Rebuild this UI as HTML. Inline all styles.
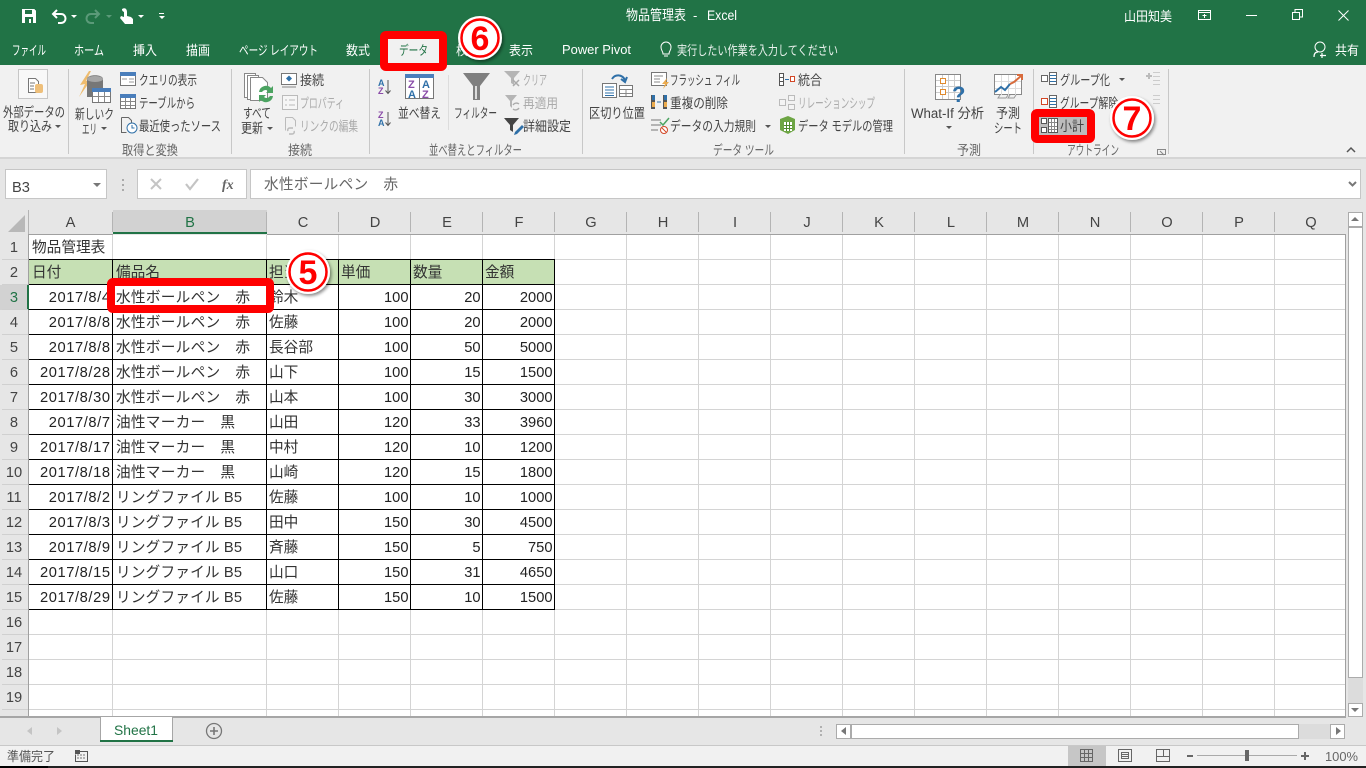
<!DOCTYPE html>
<html lang="ja"><head><meta charset="utf-8"><title>物品管理表 - Excel</title>
<style>
html,body{margin:0;padding:0;background:#e6e6e6;width:1366px;height:768px;overflow:hidden}
svg{display:block}
text{font-family:"Liberation Sans","Noto Sans CJK JP",sans-serif;white-space:pre}
.t{font-size:13px;fill:#fff}
.r{font-size:13.5px;fill:#444}
.g{font-size:13.5px;fill:#ababab}
.l{font-size:13.5px;fill:#666}
.c{font-size:14.67px;fill:#333}
.h{font-size:14.67px;fill:#444;text-anchor:middle}
.n{font-size:14.67px;fill:#222;text-anchor:end}
.d{font-size:14.67px;fill:#222;text-anchor:end;letter-spacing:.6px}
.cir{font-size:34px;font-weight:bold;fill:#f00;text-anchor:middle}
</style></head><body>
<svg width="1366" height="768" viewBox="0 0 1366 768" xmlns="http://www.w3.org/2000/svg">
<defs><filter id="s" x="-30%" y="-30%" width="160%" height="160%"><feDropShadow dx="1.5" dy="2" stdDeviation="1.5" flood-color="#000" flood-opacity=".45"/></filter></defs>
<rect width="1366" height="768" fill="#e6e6e6"/>
<!-- title bar -->
<rect width="1366" height="65" fill="#217346"/>
<g shape-rendering="crispEdges">
<path d="M22 9h12l2 2v12H22z" fill="#fff"/><rect x="25" y="10" width="7" height="4" fill="#217346"/><rect x="25" y="17" width="8" height="6" fill="#217346"/><rect x="29" y="19" width="2" height="4" fill="#fff"/>
</g>
<path d="M57 10l-4 4 4 4M53 14h8c6 0 6 9 0 9h-3" fill="none" stroke="#fff" stroke-width="2"/>
<path d="M71 15h6l-3 3z" fill="#fff"/>
<path d="M95 10l4 4-4 4M99 14h-8c-6 0-6 9 0 9h3" fill="none" stroke="#5b9a79" stroke-width="2"/>
<path d="M106 15h6l-3 3z" fill="#5b9a79"/>
<path d="M122 9c3-2 5 0 5 3v4l4 1 2 2v5h-8l-5-6 1-2 3 1v-5c-2-1-2-2-2-3z" fill="#fff"/>
<path d="M138 15h6l-3 3z" fill="#fff"/>
<path d="M159 13h5v1h-5zM159 16h6l-3 3z" fill="#fff"/>
<text x="626" y="20" class="t" style="font-size:14px" textLength="60" lengthAdjust="spacingAndGlyphs">物品管理表</text>
<text x="693" y="20" class="t">-</text>
<text x="707" y="20" class="t" style="font-size:14px" textLength="30" lengthAdjust="spacingAndGlyphs">Excel</text>
<text x="1124" y="21" class="t" textLength="48" lengthAdjust="spacingAndGlyphs">山田知美</text>
<g fill="none" stroke="#fff" shape-rendering="crispEdges">
<rect x="1198.500" y="10.500" width="12" height="9"/><path d="M1198 12.500h13M1204.500 18v-4M1202.500 15.500h4"/>
<path d="M1246 15.500h11"/><rect x="1292.500" y="12.500" width="7" height="7"/><path d="M1295 12v-2.500h7.500v7.500h-3"/>
</g>
<path d="M1338.500 10.500l10 10M1348.500 10.500l-10 10" stroke="#fff" fill="none"/>
<!-- tabs -->
<text x="12" y="55" class="t" textLength="34" lengthAdjust="spacingAndGlyphs">ファイル</text>
<text x="74" y="55" class="t" textLength="30" lengthAdjust="spacingAndGlyphs">ホーム</text>
<text x="133" y="55" class="t" textLength="24" lengthAdjust="spacingAndGlyphs">挿入</text>
<text x="186" y="55" class="t" textLength="24" lengthAdjust="spacingAndGlyphs">描画</text>
<text x="239" y="55" class="t" textLength="79" lengthAdjust="spacingAndGlyphs">ページ レイアウト</text>
<text x="346" y="55" class="t" textLength="24" lengthAdjust="spacingAndGlyphs">数式</text>
<text x="456" y="55" class="t" textLength="24" lengthAdjust="spacingAndGlyphs">校閲</text>
<text x="509" y="55" class="t" textLength="24" lengthAdjust="spacingAndGlyphs">表示</text>
<text x="562" y="54" class="t" textLength="69" lengthAdjust="spacingAndGlyphs">Power Pivot</text>
<path d="M663 54c0-3-2-3-2-7a5 5 0 0 1 10 0c0 4-2 4-2 7zM664 56h4" fill="none" stroke="#fff"/>
<text x="677" y="55" class="t" textLength="161" lengthAdjust="spacingAndGlyphs" fill-opacity=".9">実行したい作業を入力してください</text>
<circle cx="1320" cy="47" r="5" fill="none" stroke="#fff"/><path d="M1314 57c0-4 2-5 4-5M1322 53v5M1320 55.500h6" fill="none" stroke="#fff" stroke-width="1.200"/>
<text x="1335" y="55" class="t" textLength="24" lengthAdjust="spacingAndGlyphs">共有</text>
<!-- ribbon -->
<rect y="65" width="1366" height="93" fill="#f1f1f1"/>
<rect y="157" width="1366" height="2" fill="#d5d5d5"/>
<g fill="#c8c8c8" shape-rendering="crispEdges">
<rect x="68" y="69" width="1" height="85"/><rect x="231" y="69" width="1" height="85"/><rect x="369" y="69" width="1" height="85"/><rect x="448" y="75" width="1" height="55" fill="#dcdcdc"/><rect x="582" y="69" width="1" height="85"/><rect x="904" y="69" width="1" height="85"/><rect x="1033" y="69" width="1" height="85"/><rect x="1168" y="69" width="1" height="85"/>
</g>
<!-- external data -->
<rect x="18.500" y="69.500" width="29" height="29" fill="#f8f8f8" stroke="#c6c6c6"/>
<path d="M28.500 78.500h7l3 3v11h-10z" fill="#fff" stroke="#777"/><path d="M30 83h5M30 86h4M30 89h4" stroke="#777"/>
<rect x="35" y="84" width="8" height="9" rx="2" fill="#eebf7a"/>
<text x="3" y="117" class="r" textLength="62" lengthAdjust="spacingAndGlyphs">外部データの</text>
<text x="8" y="131" class="r" textLength="44" lengthAdjust="spacingAndGlyphs">取り込み</text>
<path d="M55 125h6l-3 3z" fill="#555"/>
<!-- new query -->
<path d="M89 71l-9 14 5-1-6 13 12-17-5 1 5-10z" fill="#eebc6e"/>
<path d="M87 79c0-5 16-5 16 0v18H87z" fill="#777"/><ellipse cx="95" cy="79" rx="8" ry="3" fill="#a6a6a6"/>
<g shape-rendering="crispEdges"><rect x="92.500" y="88.500" width="18" height="14" fill="#fff" stroke="#777"/><rect x="92" y="88" width="19" height="4" fill="#4a7ebb"/><path d="M98.500 92v10M104.500 92v10M93 96.500h17" stroke="#888"/></g>
<text x="75" y="119" class="r" textLength="39" lengthAdjust="spacingAndGlyphs">新しいク</text>
<text x="82" y="134" class="r" textLength="15" lengthAdjust="spacingAndGlyphs">エリ</text>
<path d="M101 127h6l-3 3z" fill="#555"/>
<g shape-rendering="crispEdges">
<rect x="120.500" y="72.500" width="15" height="13" fill="#fff" stroke="#777"/><rect x="120" y="72" width="16" height="4" fill="#4a7ebb"/><path d="M129 79h5M129 82h5M122 79h5" stroke="#999"/>
<rect x="120.500" y="94.500" width="15" height="14" fill="#fff" stroke="#777"/><rect x="120" y="94" width="16" height="4" fill="#4a7ebb"/><path d="M125.500 98v10M130.500 98v10M121 101.500h14M121 105.500h14" stroke="#888"/>
</g>
<path d="M121.500 117.500h7l3 3v6M121.500 117.500v15h5" fill="none" stroke="#666"/>
<circle cx="132" cy="128" r="5" fill="#fff" stroke="#2f70a8"/><path d="M132 125v3h2.500" fill="none" stroke="#2f70a8"/>
<text x="139" y="85" class="r" textLength="58" lengthAdjust="spacingAndGlyphs">クエリの表示</text>
<text x="139" y="108" class="r" textLength="56" lengthAdjust="spacingAndGlyphs">テーブルから</text>
<text x="139" y="131" class="r" textLength="82" lengthAdjust="spacingAndGlyphs">最近使ったソース</text>
<text x="122" y="155" class="l" textLength="56" lengthAdjust="spacingAndGlyphs">取得と変換</text>
<!-- refresh -->
<g fill="#fff" stroke="#888"><path d="M244.500 73.500h11v24h-11z"/><path d="M247.500 75.500h11v24h-11z"/><path d="M250.500 77.500h12l5 5v18h-17z"/></g>
<path d="M259 92a7 7 0 0 1 12-4l2-2v7h-7l2-2a4 4 0 0 0-6 1zM273 96a7 7 0 0 1-12 4l-2 2v-7h7l-2 2a4 4 0 0 0 6-1z" fill="#4ba361"/>
<text x="243" y="118" class="r" textLength="28" lengthAdjust="spacingAndGlyphs">すべて</text>
<text x="241" y="133" class="r" textLength="22" lengthAdjust="spacingAndGlyphs">更新</text>
<path d="M267 127h6l-3 3z" fill="#555"/>
<rect x="281.500" y="73.500" width="15" height="11" fill="#fff" stroke="#777" shape-rendering="crispEdges"/><path d="M289 75.500l3 3-3 3-3-3z" fill="#2f70a8"/><path d="M282 87h14" stroke="#888"/>
<rect x="282.500" y="95.500" width="15" height="14" fill="#f6f6f6" stroke="#bbb" shape-rendering="crispEdges"/><path d="M285 100h2M289 100h6M285 105h2M289 105h6" stroke="#bbb"/>
<path d="M285.500 117.500h7l3 3v6M285.500 117.500v13" fill="none" stroke="#bbb"/><path d="M288 131a2 2 0 0 1 2-3h3M294 131a2 2 0 0 1-2 3h-3" fill="none" stroke="#bbb" stroke-width="1.500"/>
<text x="300" y="85" class="r" textLength="24" lengthAdjust="spacingAndGlyphs">接続</text>
<text x="300" y="108" class="g" textLength="44" lengthAdjust="spacingAndGlyphs">プロパティ</text>
<text x="300" y="131" class="g" textLength="58" lengthAdjust="spacingAndGlyphs">リンクの編集</text>
<text x="288" y="155" class="l" textLength="24" lengthAdjust="spacingAndGlyphs">接続</text>
<!-- sort -->
<text x="378" y="86" font-size="9" font-weight="bold" fill="#2f70a8">A</text><text x="378" y="94" font-size="9" font-weight="bold" fill="#8a4ca8">Z</text>
<path d="M388 80v13M385.500 90.500l2.500 3 2.500-3" fill="none" stroke="#555"/>
<text x="378" y="118" font-size="9" font-weight="bold" fill="#8a4ca8">Z</text><text x="378" y="126" font-size="9" font-weight="bold" fill="#2f70a8">A</text>
<path d="M388 112v13M385.500 122.500l2.500 3 2.500-3" fill="none" stroke="#555"/>
<rect x="405.500" y="74.500" width="28" height="24" fill="#fff" stroke="#777" shape-rendering="crispEdges"/><rect x="405" y="74" width="29" height="4" fill="#4a7ebb"/><path d="M419.500 78v20" stroke="#777"/>
<text x="408" y="88" font-size="11" font-weight="bold" fill="#8a4ca8">Z</text><text x="408" y="98" font-size="11" font-weight="bold" fill="#2f70a8">A</text>
<text x="422" y="88" font-size="11" font-weight="bold" fill="#2f70a8">A</text><text x="422" y="98" font-size="11" font-weight="bold" fill="#8a4ca8">Z</text>
<text x="398" y="118" class="r" textLength="43" lengthAdjust="spacingAndGlyphs">並べ替え</text>
<path d="M463 73h27l-10 13v14h-7V86z" fill="#7f7f7f"/><path d="M476 86v13" stroke="#ddd" stroke-width="2"/>
<text x="454" y="118" class="r" textLength="43" lengthAdjust="spacingAndGlyphs">フィルター</text>
<path d="M504 71h16l-6 7v7l-3-2v-5z" fill="#b5b5b5"/><path d="M513 80l6 6M519 80l-6 6" stroke="#aaa" stroke-width="1.500"/>
<path d="M505 95h12l-5 6v7l-2-2v-5z" fill="#b5b5b5"/><path d="M513 105a4 4 0 0 1 6-1M519 108a4 4 0 0 1-6 1" fill="none" stroke="#aaa" stroke-width="1.300"/>
<path d="M504 118h15l-6 7v7l-3-2v-5z" fill="#444"/><path d="M515 132l7-7 2 2-7 7-3 1z" fill="#2f70a8"/>
<text x="523" y="85" class="g" textLength="24" lengthAdjust="spacingAndGlyphs">クリア</text>
<text x="523" y="108" class="g" textLength="35" lengthAdjust="spacingAndGlyphs">再適用</text>
<text x="523" y="131" class="r" textLength="48" lengthAdjust="spacingAndGlyphs">詳細設定</text>
<text x="429" y="155" class="l" textLength="93" lengthAdjust="spacingAndGlyphs">並べ替えとフィルター</text>
<!-- data tools -->
<rect x="602.500" y="83.500" width="14" height="14" fill="#fff" stroke="#777" shape-rendering="crispEdges"/>
<path d="M605 87h9M605 90h9M605 93h9M605 95.500h9" stroke="#2f70a8" shape-rendering="crispEdges"/>
<rect x="619.500" y="85.500" width="13" height="11" fill="#fff" stroke="#777" shape-rendering="crispEdges"/><path d="M620 89.500h12M620 93.500h12M626 90v6" stroke="#888" shape-rendering="crispEdges"/>
<path d="M612 79c3-5 10-5 13 1M621 79l4 3 2-5" fill="none" stroke="#2f70a8" stroke-width="2"/>
<text x="589" y="118" class="r" textLength="56" lengthAdjust="spacingAndGlyphs">区切り位置</text>
<rect x="651.500" y="72.500" width="15" height="13" fill="#fff" stroke="#777" shape-rendering="crispEdges"/><path d="M654 76h9M654 79h6M654 82h6" stroke="#888"/><path d="M667 78l-5 6h3l-2 5 6-7h-3z" fill="#ecab4d"/>
<rect x="651" y="95" width="4" height="14" fill="#555"/><rect x="663" y="95" width="4" height="14" fill="#555"/><rect x="652" y="95" width="3" height="5" fill="#2f70a8"/><rect x="664" y="95" width="3" height="5" fill="#2f70a8"/><rect x="652" y="102" width="3" height="5" fill="#ecab4d"/><rect x="664" y="102" width="3" height="5" fill="#ecab4d"/><path d="M657 102h4" stroke="#2f70a8"/>
<path d="M651 120h10M651 125h10M651 130h7" stroke="#777" stroke-width="1"/><path d="M660 122l3 3 6-7" fill="none" stroke="#4ba361" stroke-width="1.500"/><circle cx="664" cy="130" r="3.500" fill="#fff" stroke="#d24726"/><path d="M662 128l4 4" stroke="#d24726"/>
<text x="670" y="85" class="r" textLength="70" lengthAdjust="spacingAndGlyphs">フラッシュ フィル</text>
<text x="670" y="108" class="r" textLength="58" lengthAdjust="spacingAndGlyphs">重複の削除</text>
<text x="670" y="131" class="r" textLength="86" lengthAdjust="spacingAndGlyphs">データの入力規則</text>
<path d="M765 125h6l-3 3z" fill="#555"/>
<path d="M779.500 73.500h4v12h-4zM779.500 77.500h4M779.500 81.500h4" fill="#fff" stroke="#555" shape-rendering="crispEdges"/><path d="M785 79.500h4" stroke="#2f70a8"/><rect x="790.500" y="76.500" width="4" height="5" fill="#fff" stroke="#d24726" shape-rendering="crispEdges"/>
<g fill="#f4f4f4" stroke="#bbb" shape-rendering="crispEdges"><rect x="779.500" y="99.500" width="6" height="6"/><rect x="788.500" y="95.500" width="6" height="5"/><rect x="788.500" y="104.500" width="6" height="5"/></g>
<path d="M780 119l8-3 7 3v11l-7 4-8-4z" fill="#6da544"/><path d="M784 122h8v9h-8z" fill="#fff"/><path d="M786.500 122v9M789.500 122v9M784 125.500h8M784 128.500h8" stroke="#4f8a2e"/>
<text x="798" y="85" class="r" textLength="24" lengthAdjust="spacingAndGlyphs">統合</text>
<text x="798" y="108" class="g" textLength="77" lengthAdjust="spacingAndGlyphs">リレーションシップ</text>
<text x="798" y="131" class="r" textLength="95" lengthAdjust="spacingAndGlyphs">データ モデルの管理</text>
<text x="713" y="155" class="l" textLength="61" lengthAdjust="spacingAndGlyphs">データ ツール</text>
<!-- forecast -->
<g shape-rendering="crispEdges"><rect x="935.500" y="74.500" width="25" height="25" fill="#fff" stroke="#888"/><path d="M942.500 75v24M948.500 75v24M954.500 75v24M936 80.500h24M936 86.500h24M936 92.500h24" stroke="#ccc"/><rect x="940.500" y="78.500" width="5" height="5" fill="#fff" stroke="#e08a2e"/><rect x="940.500" y="89.500" width="5" height="5" fill="#fff" stroke="#e08a2e"/></g>
<text x="952" y="102" font-size="22" font-weight="bold" fill="#2f70a8">?</text>
<text x="911" y="118" class="r" textLength="73" lengthAdjust="spacingAndGlyphs">What-If 分析</text>
<path d="M946 126h6l-3 3z" fill="#555"/>
<g shape-rendering="crispEdges"><rect x="994.500" y="74.500" width="27" height="20" fill="#fff" stroke="#888"/><path d="M1001.500 75v20M1008.500 75v20M1015.500 75v20M995 81.500h26M995 88.500h26" stroke="#ddd"/></g>
<path d="M995 92l6-5 4 3 5-6" fill="none" stroke="#2f70a8" stroke-width="2"/><path d="M1010 84l4-2 7-6M1017 75h5v5" fill="none" stroke="#d86b3c" stroke-width="2"/>
<path d="M1000 95l-2 3h8l2-3M1010 95l-2 3h6l2-3" fill="none" stroke="#999"/>
<text x="996" y="118" class="r" textLength="24" lengthAdjust="spacingAndGlyphs">予測</text>
<text x="994" y="133" class="r" textLength="28" lengthAdjust="spacingAndGlyphs">シート</text>
<text x="957" y="155" class="l" textLength="24" lengthAdjust="spacingAndGlyphs">予測</text>
<!-- outline -->
<g shape-rendering="crispEdges" fill="#fff" stroke="#666">
<rect x="1041.500" y="75.500" width="6" height="6"/><rect x="1049.500" y="72.500" width="7" height="12"/>
<rect x="1041.500" y="98.500" width="6" height="6" stroke="#d24726"/><rect x="1049.500" y="95.500" width="7" height="12"/>
</g>
<path d="M1050 75.500h6M1050 78.500h6M1050 81.500h6M1050 98.500h6M1050 101.500h6M1050 104.500h6" stroke="#2f70a8" shape-rendering="crispEdges"/>
<text x="1060" y="85" class="r" textLength="50" lengthAdjust="spacingAndGlyphs">グループ化</text>
<path d="M1119 78h6l-3 3z" fill="#555"/>
<path d="M1146 76h6M1149 73v6" stroke="#bbb" stroke-width="2"/><path d="M1153 72.500h7M1153 76.500h7M1153 80.500h7M1153 84.500h7" stroke="#ccc"/>
<path d="M1153 95.500h7M1153 99.500h7M1153 103.500h7" stroke="#ccc"/>
<text x="1060" y="108" class="r" textLength="58" lengthAdjust="spacingAndGlyphs">グループ解除</text>
<text x="1067" y="155" class="l" textLength="52" lengthAdjust="spacingAndGlyphs">アウトライン</text>
<path d="M1157.500 149.500h8v5h-8zM1160 151l4 4" fill="none" stroke="#888"/>
<path d="M1347 152l4-4 4 4" fill="none" stroke="#555" stroke-width="1.500"/>
<!-- formula bar -->
<g shape-rendering="crispEdges">
<rect x="5.500" y="169.500" width="101" height="29" fill="#fff" stroke="#c6c6c6"/>
<rect x="137.500" y="169.500" width="109" height="29" fill="#fff" stroke="#c6c6c6"/>
<rect x="250.500" y="169.500" width="1110" height="29" fill="#fff" stroke="#c6c6c6"/>
<path d="M122 179h2v2h-2zM122 184h2v2h-2zM122 189h2v2h-2z" fill="#aaa"/>
</g>
<text x="12" y="192" font-size="14.670" fill="#444">B3</text>
<path d="M93 183h8l-4 4z" fill="#777"/>
<path d="M151 179l10 10M161 179l-10 10" stroke="#c4c4c4" stroke-width="2"/>
<path d="M186 184l4 5 8-10" fill="none" stroke="#c4c4c4" stroke-width="2.200"/>
<text x="222" y="189" style="font-family:'Liberation Serif',serif" font-size="14" font-style="italic" font-weight="bold" fill="#666">fx</text>
<text x="264" y="189" font-size="14.670" fill="#666" textLength="134">水性ボールペン　赤</text>
<path d="M1349 182l3.500 3.500 3.500-3.500" fill="none" stroke="#777" stroke-width="2"/>
<!-- grid -->
<rect x="29" y="235" width="1317" height="481" fill="#fff"/>
<rect x="29" y="260" width="526" height="25" fill="#c6e0b4"/>
<path fill="none" stroke="#d4d4d4" shape-rendering="crispEdges" d="M112.500 235V716M266.500 235V716M338.500 235V716M410.500 235V716M482.500 235V716M554.500 235V716M626.500 235V716M698.500 235V716M770.500 235V716M842.500 235V716M914.500 235V716M986.500 235V716M1058.500 235V716M1130.500 235V716M1202.500 235V716M1274.500 235V716M29 259.500H1346M29 284.500H1346M29 309.500H1346M29 334.500H1346M29 359.500H1346M29 384.500H1346M29 409.500H1346M29 434.500H1346M29 459.500H1346M29 484.500H1346M29 509.500H1346M29 534.500H1346M29 559.500H1346M29 584.500H1346M29 609.500H1346M29 634.500H1346M29 659.500H1346M29 684.500H1346M29 709.500H1346"/>
<path fill="none" stroke="#000" shape-rendering="crispEdges" d="M28.500 259V610M112.500 259V610M266.500 259V610M338.500 259V610M410.500 259V610M482.500 259V610M554.500 259V610M28 259.500H555M28 284.500H555M28 309.500H555M28 334.500H555M28 359.500H555M28 384.500H555M28 409.500H555M28 434.500H555M28 459.500H555M28 484.500H555M28 509.500H555M28 534.500H555M28 559.500H555M28 584.500H555M28 609.500H555"/>
<!-- headers -->
<g shape-rendering="crispEdges">
<rect x="113" y="210" width="154" height="24" fill="#d2d2d2"/><rect x="113" y="232" width="154" height="2" fill="#217346"/>
<rect x="0" y="285" width="28" height="25" fill="#d2d2d2"/><rect x="27" y="285" width="2" height="25" fill="#217346"/>
<path fill="none" stroke="#b4b4b4" d="M28.500 210V234M112.500 212V232M266.500 212V232M338.500 212V232M410.500 212V232M482.500 212V232M554.500 212V232M626.500 212V232M698.500 212V232M770.500 212V232M842.500 212V232M914.500 212V232M986.500 212V232M1058.500 212V232M1130.500 212V232M1202.500 212V232M1274.500 212V232"/>
<path fill="none" stroke="#d0d0d0" d="M2 259.500H28M2 284.500H28M2 309.500H28M2 334.500H28M2 359.500H28M2 384.500H28M2 409.500H28M2 434.500H28M2 459.500H28M2 484.500H28M2 509.500H28M2 534.500H28M2 559.500H28M2 584.500H28M2 609.500H28M2 634.500H28M2 659.500H28M2 684.500H28M2 709.500H28"/>
<path fill="none" stroke="#a0a0a0" d="M28.500 234V285M28.500 310V717M29 234.500H113M267 234.500H1346M1345.500 234V717"/>
</g>
<path d="M8 232l17-17v17z" fill="#b8b8b8"/>
<text x="70.500" y="227" class="h">A</text><text x="190" y="227" class="h" style="fill:#217346">B</text><text x="303" y="227" class="h">C</text><text x="375" y="227" class="h">D</text><text x="447" y="227" class="h">E</text><text x="519" y="227" class="h">F</text><text x="591" y="227" class="h">G</text><text x="663" y="227" class="h">H</text><text x="735" y="227" class="h">I</text><text x="807" y="227" class="h">J</text><text x="879" y="227" class="h">K</text><text x="951" y="227" class="h">L</text><text x="1023" y="227" class="h">M</text><text x="1095" y="227" class="h">N</text><text x="1167" y="227" class="h">O</text><text x="1239" y="227" class="h">P</text><text x="1311" y="227" class="h">Q</text>
<text x="14" y="252" class="h">1</text><text x="14" y="277" class="h">2</text><text x="14" y="302" class="h" style="fill:#217346">3</text><text x="14" y="327" class="h">4</text><text x="14" y="352" class="h">5</text><text x="14" y="377" class="h">6</text><text x="14" y="402" class="h">7</text><text x="14" y="427" class="h">8</text><text x="14" y="452" class="h">9</text><text x="14" y="477" class="h">10</text><text x="14" y="502" class="h">11</text><text x="14" y="527" class="h">12</text><text x="14" y="552" class="h">13</text><text x="14" y="577" class="h">14</text><text x="14" y="602" class="h">15</text><text x="14" y="627" class="h">16</text><text x="14" y="652" class="h">17</text><text x="14" y="677" class="h">18</text><text x="14" y="702" class="h">19</text>
<clipPath id="cp"><rect x="0" y="710" width="28" height="6"/></clipPath><text x="14" y="727" class="h" clip-path="url(#cp)">20</text>
<!-- cells -->
<text x="32" y="252" class="c">物品管理表</text>
<text x="32" y="277" class="c">日付</text><text x="116" y="277" class="c">備品名</text><text x="269" y="277" class="c">担当</text><text x="341" y="277" class="c">単価</text><text x="413" y="277" class="c">数量</text><text x="485" y="277" class="c">金額</text>
<g>
<text x="110.600" y="302" class="d">2017/8/4</text><text x="116" y="302" class="c" textLength="134">水性ボールペン　赤</text><text x="269" y="302" class="c">鈴木</text><text x="408.500" y="302" class="n">100</text><text x="480.500" y="302" class="n">20</text><text x="552.500" y="302" class="n">2000</text>
<text x="110.600" y="327" class="d">2017/8/8</text><text x="116" y="327" class="c" textLength="134">水性ボールペン　赤</text><text x="269" y="327" class="c">佐藤</text><text x="408.500" y="327" class="n">100</text><text x="480.500" y="327" class="n">20</text><text x="552.500" y="327" class="n">2000</text>
<text x="110.600" y="352" class="d">2017/8/8</text><text x="116" y="352" class="c" textLength="134">水性ボールペン　赤</text><text x="269" y="352" class="c">長谷部</text><text x="408.500" y="352" class="n">100</text><text x="480.500" y="352" class="n">50</text><text x="552.500" y="352" class="n">5000</text>
<text x="110.600" y="377" class="d">2017/8/28</text><text x="116" y="377" class="c" textLength="134">水性ボールペン　赤</text><text x="269" y="377" class="c">山下</text><text x="408.500" y="377" class="n">100</text><text x="480.500" y="377" class="n">15</text><text x="552.500" y="377" class="n">1500</text>
<text x="110.600" y="402" class="d">2017/8/30</text><text x="116" y="402" class="c" textLength="134">水性ボールペン　赤</text><text x="269" y="402" class="c">山本</text><text x="408.500" y="402" class="n">100</text><text x="480.500" y="402" class="n">30</text><text x="552.500" y="402" class="n">3000</text>
<text x="110.600" y="427" class="d">2017/8/7</text><text x="116" y="427" class="c" textLength="119">油性マーカー　黒</text><text x="269" y="427" class="c">山田</text><text x="408.500" y="427" class="n">120</text><text x="480.500" y="427" class="n">33</text><text x="552.500" y="427" class="n">3960</text>
<text x="110.600" y="452" class="d">2017/8/17</text><text x="116" y="452" class="c" textLength="119">油性マーカー　黒</text><text x="269" y="452" class="c">中村</text><text x="408.500" y="452" class="n">120</text><text x="480.500" y="452" class="n">10</text><text x="552.500" y="452" class="n">1200</text>
<text x="110.600" y="477" class="d">2017/8/18</text><text x="116" y="477" class="c" textLength="119">油性マーカー　黒</text><text x="269" y="477" class="c">山崎</text><text x="408.500" y="477" class="n">120</text><text x="480.500" y="477" class="n">15</text><text x="552.500" y="477" class="n">1800</text>
<text x="110.600" y="502" class="d">2017/8/2</text><text x="116" y="502" class="c" textLength="126">リングファイル B5</text><text x="269" y="502" class="c">佐藤</text><text x="408.500" y="502" class="n">100</text><text x="480.500" y="502" class="n">10</text><text x="552.500" y="502" class="n">1000</text>
<text x="110.600" y="527" class="d">2017/8/3</text><text x="116" y="527" class="c" textLength="126">リングファイル B5</text><text x="269" y="527" class="c">田中</text><text x="408.500" y="527" class="n">150</text><text x="480.500" y="527" class="n">30</text><text x="552.500" y="527" class="n">4500</text>
<text x="110.600" y="552" class="d">2017/8/9</text><text x="116" y="552" class="c" textLength="126">リングファイル B5</text><text x="269" y="552" class="c">斉藤</text><text x="408.500" y="552" class="n">150</text><text x="480.500" y="552" class="n">5</text><text x="552.500" y="552" class="n">750</text>
<text x="110.600" y="577" class="d">2017/8/15</text><text x="116" y="577" class="c" textLength="126">リングファイル B5</text><text x="269" y="577" class="c">山口</text><text x="408.500" y="577" class="n">150</text><text x="480.500" y="577" class="n">31</text><text x="552.500" y="577" class="n">4650</text>
<text x="110.600" y="602" class="d">2017/8/29</text><text x="116" y="602" class="c" textLength="126">リングファイル B5</text><text x="269" y="602" class="c">佐藤</text><text x="408.500" y="602" class="n">150</text><text x="480.500" y="602" class="n">10</text><text x="552.500" y="602" class="n">1500</text>
</g>
<!-- sheet tabs -->
<rect x="0" y="717" width="1366" height="28" fill="#e6e6e6"/>
<rect y="716" width="1346" height="2" fill="#a6a6a6"/>
<rect x="0" y="745" width="1366" height="1" fill="#c8c8c8"/>
<path d="M32 727v8l-5-4zM57 727v8l5-4z" fill="#c4c4c4"/>
<path d="M100.500 717V741M172.500 717V741" fill="none" stroke="#a6a6a6" shape-rendering="crispEdges"/>
<rect x="101" y="717" width="71" height="24" fill="#fff"/><rect x="100" y="740" width="73" height="2" fill="#217346"/>
<text x="114" y="735" font-size="14" fill="#217346" textLength="44" lengthAdjust="spacingAndGlyphs">Sheet1</text>
<circle cx="214" cy="731" r="7.500" fill="none" stroke="#777" stroke-width="1.300"/><path d="M210 731h8M214 727v8" stroke="#777" stroke-width="1.600"/>
<!-- scrollbars -->
<g shape-rendering="crispEdges">
<rect x="1348" y="228" width="15" height="475" fill="#dcdcdc"/>
<rect x="1348.500" y="212.500" width="14" height="14" fill="#fff" stroke="#ababab"/>
<rect x="1348.500" y="227.500" width="14" height="450" fill="#fff" stroke="#ababab"/>
<rect x="1348.500" y="703.500" width="14" height="13" fill="#fff" stroke="#ababab"/>
<rect x="851" y="724" width="480" height="15" fill="#dcdcdc"/>
<rect x="836.500" y="724.500" width="14" height="14" fill="#fff" stroke="#ababab"/>
<rect x="851.500" y="724.500" width="447" height="14" fill="#fff" stroke="#ababab"/>
<rect x="1330.500" y="724.500" width="14" height="14" fill="#fff" stroke="#ababab"/>
<path d="M820 726h2v2h-2zM820 730h2v2h-2zM820 734h2v2h-2z" fill="#b0b0b0"/>
</g>
<path d="M1351 221l4-4 4 4zM1351 708h8l-4 4zM846 727v8l-5-4zM1336 727v8l5-4z" fill="#777"/>
<!-- status -->
<rect y="746" width="1366" height="20" fill="#f1f1f1"/>
<rect y="766" width="1366" height="2" fill="#222"/>
<rect y="766" width="48" height="2" fill="#000"/>
<text x="7" y="761" font-size="13" fill="#555" textLength="48" lengthAdjust="spacingAndGlyphs">準備完了</text>
<g shape-rendering="crispEdges"><path d="M79.500 751.500h8v10h-12v-7" fill="none" stroke="#555"/><rect x="75" y="750" width="5" height="4" fill="#555"/><path d="M77 755h9M77 758h9" stroke="#777" stroke-dasharray="2 1"/></g>
<rect x="1068" y="746" width="38" height="20" fill="#c6c6c6"/>
<g fill="none" stroke="#666" shape-rendering="crispEdges">
<rect x="1080.500" y="749.500" width="12" height="12"/><path d="M1084.500 750v11M1088.500 750v11M1081 753.500h11M1081 757.500h11"/>
<rect x="1118.500" y="749.500" width="13" height="12"/><rect x="1121.500" y="752.500" width="7" height="6"/><path d="M1122 754.500h6M1122 756.500h6"/>
<rect x="1156.500" y="749.500" width="13" height="12"/><path d="M1156 756.500h14M1163.500 750v6"/>
</g>
<g shape-rendering="crispEdges">
<rect x="1187" y="755" width="6" height="2" fill="#666"/>
<rect x="1197" y="755" width="100" height="1" fill="#aaa"/>
<rect x="1245" y="750" width="4" height="11" fill="#666"/>
<rect x="1301" y="755" width="8" height="2" fill="#666"/><rect x="1304" y="752" width="2" height="8" fill="#666"/>
</g>
<text x="1325" y="761" font-size="13" fill="#666" textLength="33" lengthAdjust="spacingAndGlyphs">100%</text>
<!-- annotations -->
<rect x="384" y="35" width="59" height="32" rx="2" fill="#f1f1f1" stroke="#f00" stroke-width="8"/>
<text x="399" y="55" font-size="13" fill="#217346" textLength="29" lengthAdjust="spacingAndGlyphs">データ</text>
<rect x="111" y="282" width="159" height="27" rx="2" fill="none" stroke="#f00" stroke-width="8"/>
<rect x="1035" y="113" width="56" height="26" rx="2" fill="#bcbcbc" stroke="#f00" stroke-width="8"/>
<g fill="#fff" stroke="#555" shape-rendering="crispEdges"><rect x="1041.500" y="118.500" width="5" height="5"/><rect x="1041.500" y="127.500" width="5" height="5"/><rect x="1048.500" y="118.500" width="9" height="14"/></g>
<path d="M1051.500 119v13M1054.500 119v13M1049 122.500h8M1049 126.500h8M1049 129.500h8" stroke="#888" shape-rendering="crispEdges"/>
<text x="1060" y="131" class="r" textLength="24" lengthAdjust="spacingAndGlyphs">小計</text>
<g filter="url(#s)"><circle cx="480" cy="38" r="22" fill="#fff"/></g>
<circle cx="480" cy="38" r="18.500" fill="none" stroke="#f00" stroke-width="2.500"/>
<text x="480" y="50" class="cir">6</text>
<g filter="url(#s)"><circle cx="308" cy="272" r="22" fill="#fff"/></g>
<circle cx="308" cy="272" r="18.500" fill="none" stroke="#f00" stroke-width="2.500"/>
<text x="308" y="284" class="cir">5</text>
<g filter="url(#s)"><circle cx="1132" cy="118" r="22" fill="#fff"/></g>
<circle cx="1132" cy="118" r="18.500" fill="none" stroke="#f00" stroke-width="2.500"/>
<text x="1132" y="130" class="cir">7</text>
</svg>
</body></html>
